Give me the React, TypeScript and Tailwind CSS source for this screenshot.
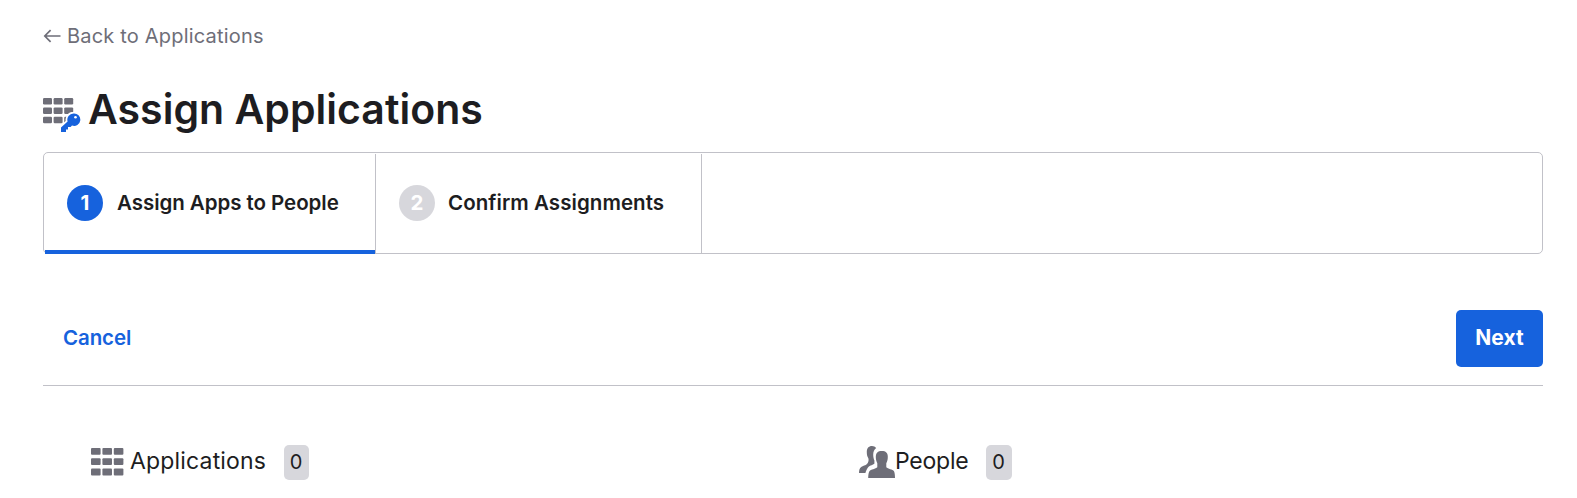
import type { ReactNode } from "react";

function Grid({ className }: { className: string }) {
  return (
    <svg className={className} viewBox="0 0 33 28" preserveAspectRatio="none" fill="#6e6e78" aria-hidden="true">
      {[0, 10.3, 20.6].map((y) =>
        [0, 11.4, 22.8].map((x) => <rect key={`${x}-${y}`} x={x} y={y} width="9.6" height="6.800" rx="1" />)
      )}
    </svg>
  );
}

function AssignIcon() {
  return (
    <svg className="h-[38px] w-[38px] shrink-0" viewBox="0 0 38 38" fill="#6e6e78" aria-hidden="true">
      {[0, 9.4, 18.7].map((y) =>
        [0, 10.6, 21.2].map((x) => <rect key={`${x}-${y}`} x={x} y={y + 1} width="9" height="6.5" rx="1.2" />)
      )}
      <path
        fill="#1662dd"
        stroke="#fff"
        strokeWidth="3.5"
        paintOrder="stroke"
        d="M30.500 16.500a6.200 6.200 0 0 0-5.900 8L18 30.600V35h5v-2.600h2v-2.500h2.600l1.400-1.400A6.200 6.200 0 1 0 30.500 16.500Z"
      />
      <circle cx="32.500" cy="20.200" r="1.3" fill="#fff" />
    </svg>
  );
}

function PeopleIcon() {
  return (
    <svg className="h-8 w-9 shrink-0" viewBox="0 0 36 32" fill="#6e6e78" aria-hidden="true">
      <path d="M7.800 6.200C7.800 2.200 9.600 0 13 0c1.800 0 3.200.7 4.200 2-2 1.400-3 3.600-3 6.400 0 2.400.5 4.400 1.200 6v3.200c-.6 1.200-4.800 2-6 3.400-1 1.200-2.400 3.600-3 6H0c.1-3 .6-5 2.200-6 2.300-1.300 6-1.900 6.800-4.400.7-2 .8-3.400.1-4.800C8.100 10 7.800 8.200 7.800 6.200Z" />
      <path d="M16.800 10.800c0-4 2-5.800 6-5.800s6 1.800 6 5.800c0 2.800-.5 4.600-1.500 6.400v4c1.500 1.800 6.500 2 7.700 4 .7 1.300 1 4 1 6.800H9.200c0-2.800.4-5.500 1.200-6.800 1.300-2 6.400-2.200 7.900-4v-4c-1-1.800-1.500-3.600-1.500-6.400Z" />
    </svg>
  );
}

function Badge({ children, className }: { children: ReactNode; className: string }) {
  return (
    <span className={`flex h-[35px] items-center justify-center rounded-[5px] bg-[#d7d7dc] pb-px text-[20px] ${className}`}>
      {children}
    </span>
  );
}

export default function App() {
  return (
    <main className="h-[498px] overflow-hidden bg-white pl-[43px] pr-[34px] pt-5 font-['Inter',sans-serif] text-[#1d1d21]">
      <a href="#" className="flex h-8 items-center text-[20px] leading-8 tracking-[0.19px] text-[#6e6e78]">
        <svg className="mb-px mr-1.5 h-4 w-[18px]" viewBox="0 0 18 16" fill="none" stroke="currentColor" strokeWidth="1.7" aria-hidden="true">
          <path d="M17.500 8H2M7.600 2.200 1.800 8l5.800 5.800" />
        </svg>
        Back to Applications
      </a>

      <h1 className="mt-8 flex h-[50px] items-center text-[41px] font-semibold leading-[50px] tracking-[0.02px]">
        <span className="mr-[7px] flex pt-3.5">
          <AssignIcon />
        </span>
        Assign Applications
      </h1>

      <ol className="mt-[18px] flex h-[102px] rounded-[5px] border border-[#c1c1c8] pt-px text-[20.5px] font-semibold">
        <li className="-mb-px ml-px flex w-[331px] items-center border-r border-[#c1c1c8] pb-0.5 pl-[22px] shadow-[inset_0_-4px_0_#1662dd]">
          <span className="mr-3.5 flex size-9 items-center justify-center rounded-full bg-[#1662dd] font-bold text-white">1</span>
          <span className="tracking-[-0.05px]">Assign Apps to People</span>
        </li>
        <li className="flex w-[326px] items-center border-r border-[#c1c1c8] pb-px pl-[23px]">
          <span className="mr-[13px] flex size-9 items-center justify-center rounded-full bg-[#d7d7dc] font-bold text-white">2</span>
          <span className="tracking-[0.06px]">Confirm Assignments</span>
        </li>
      </ol>

      <div className="mt-14 flex h-[76px] items-start justify-between border-b border-[#c1c1c8]">
        <button className="h-[57px] pl-5 text-[20.5px] font-semibold tracking-[-0.1px] text-[#1662dd]">Cancel</button>
        <button className="h-[57px] w-[87px] rounded-[5px] bg-[#1662dd] pb-px text-[21px] font-bold text-white">Next</button>
      </div>

      <div className="mt-[59px] flex text-[23px]">
        <section className="flex h-[35px] w-[769px] items-center pl-[47.5px]">
          <Grid className="mb-0.5 mr-[6.500px] h-7 w-[33px] shrink-0" />
          <h2 className="-mt-0.5 tracking-[0.17px]">Applications</h2>
          <Badge className="ml-[17.5px] w-[25px]">0</Badge>
        </section>
        <section className="flex h-[35px] items-center pl-[47px]">
          <span className="flex pb-px">
            <PeopleIcon />
          </span>
          <h2 className="-mt-0.5 tracking-[-0.22px]">People</h2>
          <Badge className="ml-[17px] w-[26px]">0</Badge>
        </section>
      </div>
    </main>
  );
}
